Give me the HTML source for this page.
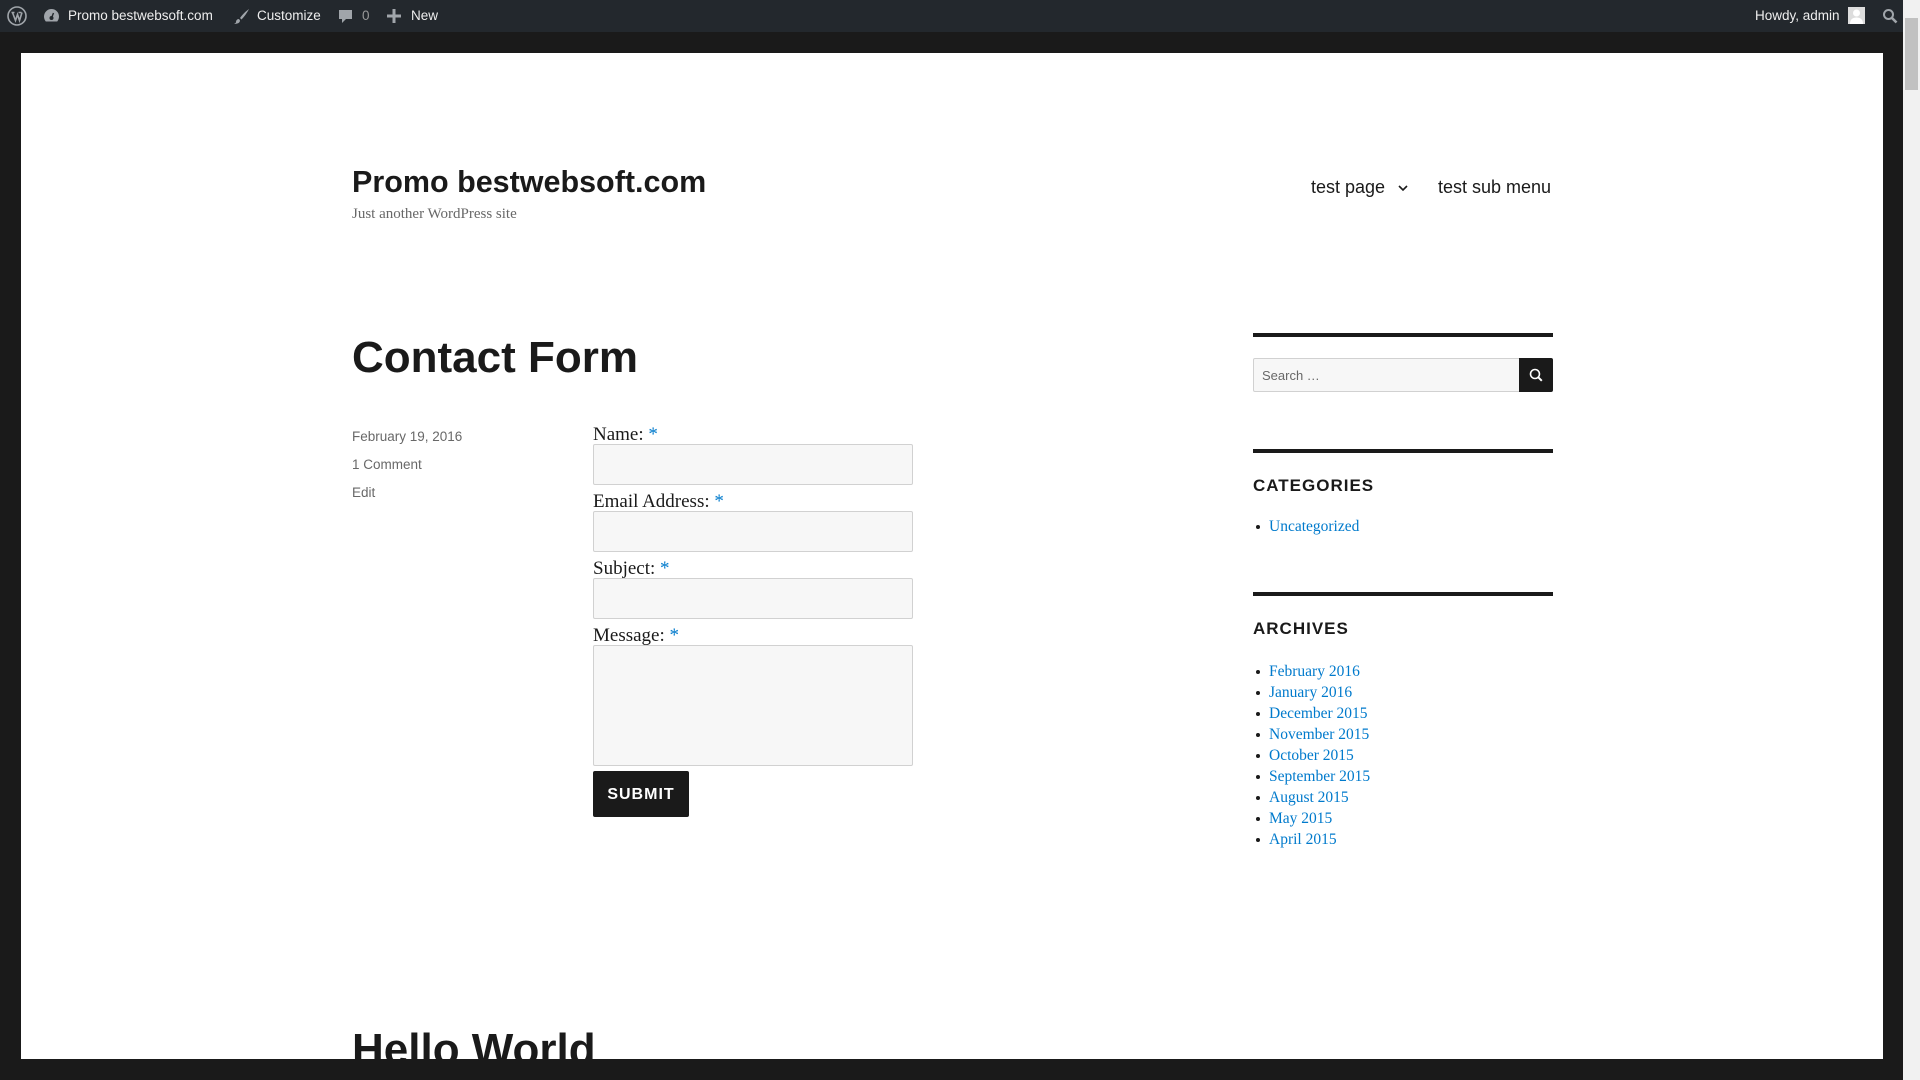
<!DOCTYPE html>
<html><head><meta charset="utf-8"><style>
*{margin:0;padding:0;box-sizing:border-box}
html,body{width:1920px;height:1080px;overflow:hidden;background:#1a1a1a;font-family:"Liberation Sans",sans-serif}
.abs{position:absolute}
#bar{position:absolute;left:0;top:0;width:1903px;height:32px;background:#23282d;color:#eee;font-size:13.5px}
#bar span{position:absolute;top:8px;white-space:nowrap}
#scroll{position:absolute;right:0;top:0;width:17px;height:1080px;background:#f1f1f1}
#thumb{position:absolute;right:2px;top:18px;width:13px;height:72px;background:#c1c1c1}
#page{position:absolute;left:21px;top:53px;width:1862px;height:1006px;background:#fff;overflow:hidden}
.t{position:absolute;white-space:nowrap;color:#1a1a1a}
.serif{font-family:"Liberation Serif",serif}
.lbl{font-family:"Liberation Serif",serif;font-size:19px;color:#1a1a1a}
.lbl b{color:#007acc;font-weight:normal}
.inp{position:absolute;left:572px;width:320px;background:#f7f7f7;border:1px solid #d1d1d1;border-radius:2px}
.rule{position:absolute;left:1232px;width:300px;height:4px;background:#1a1a1a}
.h2{font-weight:bold;font-size:17px;letter-spacing:1px;color:#1a1a1a}
ul{list-style:none}
li{position:relative;padding-left:16px;height:21px;line-height:21px;font-family:"Liberation Serif",serif;font-size:15.5px;color:#007acc}
li:before{content:"";position:absolute;left:3px;top:9px;width:4px;height:4px;border-radius:50%;background:#1a1a1a}
</style></head><body>
<div id="bar">
<svg class="abs" style="left:7px;top:6px" width="20" height="20" viewBox="0 0 20 20"><circle cx="10" cy="10" r="9" fill="none" stroke="#a0a5aa" stroke-width="1.6"/><path d="M4.5 6.5h3M11.5 6.5h3M5.5 6.5l3 8 2-6 2 6 2.5-8" stroke="#a0a5aa" stroke-width="1.6" fill="none"/></svg>
<svg class="abs" style="left:43px;top:8px" width="17" height="15" viewBox="0 0 17 15"><path d="M8.5 1a7.5 7.5 0 0 0-7.5 7.5c0 2 .7 3.6 1.8 5h11.4c1.1-1.4 1.8-3 1.8-5A7.5 7.5 0 0 0 8.5 1z" fill="#a0a5aa"/><circle cx="8.5" cy="10" r="2" fill="#23282d"/><path d="M8.5 10l2-5" stroke="#23282d" stroke-width="1.4"/></svg>
<span style="left:68px">Promo bestwebsoft.com</span>
<svg class="abs" style="left:233px;top:8px" width="17" height="17" viewBox="0 0 17 17"><path d="M16 1c-3 2-7 6-9 9l1.5 1.5C11 9 14 5 16 1zM6 11c-2 0-3 1.5-3 3 0 1-1 1.5-2 2 3 0 6-1 6-3.5z" fill="#a0a5aa"/></svg>
<span style="left:257px">Customize</span>
<svg class="abs" style="left:338px;top:9px" width="15" height="16" viewBox="0 0 15 16"><path d="M1 1h13v9H8l-4 4v-4H1z" fill="#a0a5aa"/></svg>
<span style="left:362px;color:#999">0</span>
<svg class="abs" style="left:387px;top:9px" width="14" height="14" viewBox="0 0 14 14"><path d="M5.5 0h3v5.5H14v3H8.5V14h-3V8.5H0v-3h5.5z" fill="#a0a5aa"/></svg>
<span style="left:411px">New</span>
<span style="left:1755px">Howdy, admin</span>
<div class="abs" style="left:1848px;top:7px;width:17px;height:17px;background:#ddd"><svg width="17" height="17"><circle cx="8.5" cy="6" r="3.5" fill="#fff"/><path d="M2 17c0-5 3-6.5 6.5-6.5S15 12 15 17z" fill="#fff"/></svg></div>
<svg class="abs" style="left:1882px;top:8px" width="16" height="16" viewBox="0 0 16 16"><circle cx="6.5" cy="6.5" r="4.5" fill="none" stroke="#a0a5aa" stroke-width="2"/><path d="M10 10l4.5 4.5" stroke="#a0a5aa" stroke-width="2.6"/></svg>
</div>
<div id="scroll"><div id="thumb"></div></div>
<div id="page">
<div class="t" style="left:331px;top:112px;font-size:30.5px;font-weight:bold">Promo bestwebsoft.com</div>
<div class="t serif" style="left:331px;top:153px;font-size:15px;color:#686868">Just another WordPress site</div>
<div class="t" style="left:1290px;top:124px;font-size:18px">test page <svg width="14" height="10" style="margin-left:6px"><path d="M3 3l4 4 4-4" fill="none" stroke="#1a1a1a" stroke-width="1.6"/></svg></div>
<div class="t" style="left:1417px;top:124px;font-size:18px">test sub menu</div>
<div class="t" style="left:331px;top:280px;font-size:44px;font-weight:bold">Contact Form</div>
<div class="t" style="left:331px;top:376px;font-size:13.5px;color:#686868">February 19, 2016</div>
<div class="t" style="left:331px;top:404px;font-size:13.5px;color:#686868">1 Comment</div>
<div class="t" style="left:331px;top:432px;font-size:13.5px;color:#686868">Edit</div>
<div class="t lbl" style="left:572px;top:371px">Name: <b>*</b></div>
<div class="inp" style="top:391px;height:41px"></div>
<div class="t lbl" style="left:572px;top:438px">Email Address: <b>*</b></div>
<div class="inp" style="top:458px;height:41px"></div>
<div class="t lbl" style="left:572px;top:505px">Subject: <b>*</b></div>
<div class="inp" style="top:525px;height:41px"></div>
<div class="t lbl" style="left:572px;top:572px">Message: <b>*</b></div>
<div class="inp" style="top:592px;height:121px"></div>
<div class="abs" style="left:572px;top:718px;width:96px;height:46px;background:#1a1a1a;border-radius:2px;color:#fff;font-weight:bold;font-size:16px;letter-spacing:1px;text-align:center;line-height:48px">SUBMIT</div>
<div class="rule" style="top:280px"></div>
<div class="abs" style="left:1232px;top:305px;width:267px;height:34px;background:#f7f7f7;border:1px solid #d1d1d1;border-radius:2px 0 0 2px;font-size:13px;color:#686868;padding:9px 8px">Search …</div>
<div class="abs" style="left:1498px;top:305px;width:34px;height:34px;background:#1a1a1a;border-radius:0 2px 2px 0"><svg width="34" height="34"><circle cx="16" cy="16" r="4.5" fill="none" stroke="#fff" stroke-width="1.6"/><path d="M19.3 19.3l3.5 3.5" stroke="#fff" stroke-width="2"/></svg></div>
<div class="rule" style="top:396px"></div>
<div class="t h2" style="left:1232px;top:423px">CATEGORIES</div>
<ul class="abs" style="left:1232px;top:463px"><li>Uncategorized</li></ul>
<div class="rule" style="top:539px"></div>
<div class="t h2" style="left:1232px;top:566px">ARCHIVES</div>
<ul class="abs" style="left:1232px;top:608px">
<li>February 2016</li><li>January 2016</li><li>December 2015</li><li>November 2015</li><li>October 2015</li><li>September 2015</li><li>August 2015</li><li>May 2015</li><li>April 2015</li>
</ul>
<div class="t" style="left:331px;top:972px;font-size:44px;font-weight:bold">Hello World</div>
</div>
</body></html>
